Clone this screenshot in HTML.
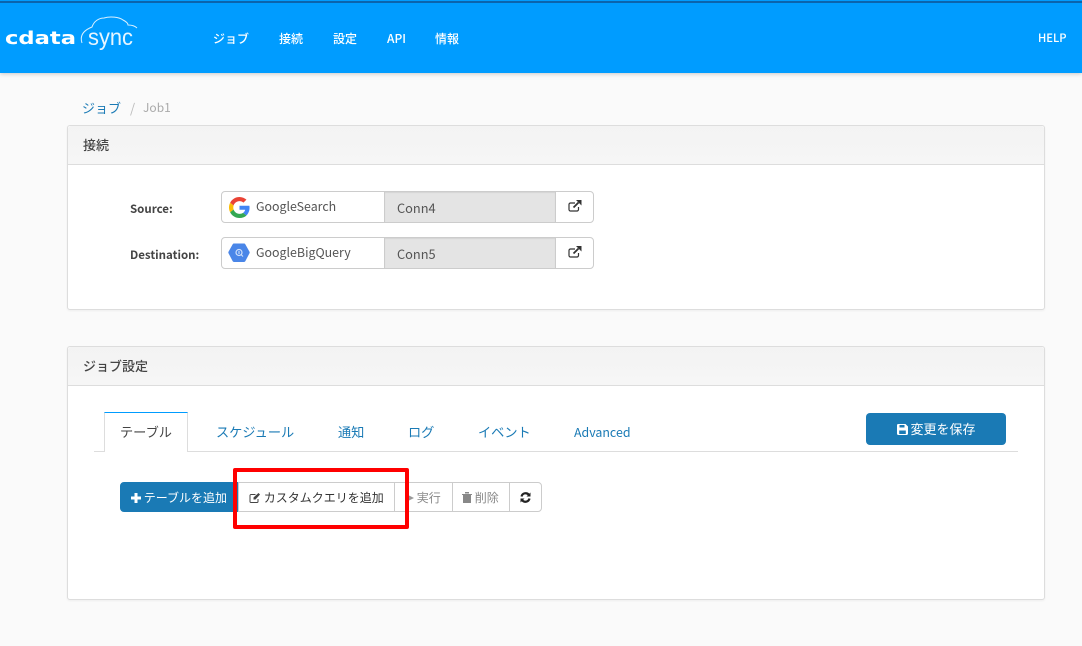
<!DOCTYPE html>
<html lang="ja">
<head>
<meta charset="utf-8">
<style>
*{box-sizing:border-box}
html,body{margin:0;padding:0}
body{width:1082px;height:646px;position:relative;overflow:hidden;background:#fafafa;font-family:"Noto Sans CJK JP","Liberation Sans",sans-serif;font-size:13px;color:#444}
.a{position:absolute;white-space:nowrap}
.top{position:absolute;left:0;top:0;width:1082px;height:73px;background:#009cff;box-shadow:0 1px 4px rgba(0,0,0,.2)}
.stripe{position:absolute;left:0;top:1px;width:1082px;height:2px;background:#0b64ad}
.nav{color:#fff;font-size:12px;font-weight:500;top:30px;line-height:17px}
.panel{position:absolute;left:67px;width:978px;background:#fff;border:1px solid #ddd;border-radius:3px;box-shadow:0 1px 2px rgba(0,0,0,.05)}
.ph{height:39px;background:linear-gradient(#f3f3f3,#f6f6f6);border-bottom:1px solid #ddd;font-size:13px;font-weight:500;color:#444;line-height:37px;padding-left:15px;border-radius:3px 3px 0 0}
.lbl{font-size:11.5px;font-weight:700;color:#444;left:130px;line-height:16px}
.grp{position:absolute;left:221px;width:373px;height:32px;background:#fff;border:1px solid #ccc;border-radius:4px}
.gray{position:absolute;left:162px;top:0;width:172px;height:30px;background:#e4e4e4;border-left:1px solid #ccc;border-right:1px solid #ccc;box-shadow:inset 0 1px 1px rgba(0,0,0,.07);font-size:12.8px;line-height:32px;padding-left:12px;color:#555}
.name{position:absolute;left:34px;top:0;line-height:29px;font-size:12.4px;color:#555}
.ext{position:absolute;left:346px;top:8px}
.tab{font-size:13.2px;color:#1a7ab5;top:423px;line-height:18px}
.btn{position:absolute;top:482px;height:30px;background:#fff;border:1px solid #ccc;font-size:12px;line-height:29px;color:#888;white-space:nowrap}
</style>
</head>
<body>
<div class="top"></div>
<div class="stripe"></div>
<svg class="a" style="left:0;top:0" width="150" height="70" viewBox="0 0 150 70">
<text x="5" y="44" font-family="'DejaVu Sans',sans-serif" font-size="18" font-weight="bold" fill="#fff" textLength="71" lengthAdjust="spacingAndGlyphs">cdata</text>
<text x="88" y="45" font-family="'Liberation Sans',sans-serif" font-size="23" fill="#fff" fill-opacity=".9" textLength="45" lengthAdjust="spacingAndGlyphs">sync</text>
<path d="M82 43C80 37 82 31 92 27C94 21 99 18 104 18C110 16 119 17 123 20C127 22 128 24 128 25C132 25 135 26 137 28" fill="none" stroke="#fff" stroke-opacity=".85" stroke-width="1"/>
</svg>
<div class="a nav" style="left:213px">ジョブ</div>
<div class="a nav" style="left:279px">接続</div>
<div class="a nav" style="left:333px">設定</div>
<div class="a nav" style="left:387px">API</div>
<div class="a nav" style="left:435px">情報</div>
<div class="a nav" style="left:1038px;font-size:11.2px">HELP</div>

<div class="a" style="left:82px;top:100px;line-height:16px;font-size:13px;color:#1a7ab5">ジョブ</div>
<div class="a" style="left:130px;top:100px;line-height:16px;font-size:13px;color:#bbb">/</div>
<div class="a" style="left:143px;top:100px;line-height:16px;font-size:12px;color:#aaa">Job1</div>

<div class="panel" style="top:125px;height:185px"><div class="ph">接続</div></div>
<div class="a lbl" style="top:201px">Source:</div>
<div class="a lbl" style="top:247px">Destination:</div>

<div class="grp" style="top:191px">
<svg class="a" style="left:7px;top:5px" width="21" height="21" viewBox="0 0 48 48">
<path fill="#EA4335" d="M24 9.500c3.500 0 6.700 1.300 9.100 3.400l6.800-6.800C35.800 2.400 30.200 0 24 0 14.600 0 6.500 5.400 2.600 13.200l7.900 6.100C12.400 13.700 17.700 9.500 24 9.500z"/>
<path fill="#4285F4" d="M47 24.500c0-1.600-.1-3.100-.4-4.500H24v9h12.900c-.6 3-2.300 5.500-4.800 7.200l7.700 6C44.300 37.600 47 31.600 47 24.500z"/>
<path fill="#FBBC05" d="M10.500 28.700C10 27.200 9.800 25.600 9.800 24s.3-3.200.7-4.700l-7.900-6.100C.9 16.500 0 20.100 0 24s.9 7.500 2.600 10.800l7.900-6.100z"/>
<path fill="#34A853" d="M24 48c6.500 0 11.900-2.100 15.900-5.800l-7.700-6c-2.200 1.400-4.900 2.300-8.200 2.300-6.300 0-11.600-4.200-13.500-9.800l-7.900 6.100C6.500 42.600 14.600 48 24 48z"/>
</svg>
<div class="name">GoogleSearch</div>
<div class="gray">Conn4</div>
<svg class="ext" style="top:7px" width="14" height="14" viewBox="0 0 14 14"><path d="M10.500 8v2.500a1.500 1.500 0 0 1-1.500 1.500H2.500A1.500 1.500 0 0 1 1 10.500V5.500A1.500 1.500 0 0 1 2.500 4H7" fill="none" stroke="#333" stroke-width="1.200"/><path d="M5.500 8.500 10.500 3.500" stroke="#333" stroke-width="1.800"/><path d="M8 1h5.500v5.500z" fill="#333"/></svg>
</div>

<div class="grp" style="top:237px">
<svg class="a" style="left:6px;top:5px" width="22" height="20" viewBox="0 0 22 20">
<path d="M6 .5h10a1.500 1.500 0 0 1 1.300.7l4.200 7.600a1.500 1.500 0 0 1 0 1.400l-4.200 8.100a1.500 1.500 0 0 1-1.300.7H6a1.500 1.500 0 0 1-1.300-.7L.5 10.200a1.500 1.500 0 0 1 0-1.400L4.700 1.200A1.500 1.500 0 0 1 6 .5z" fill="#4a86e8"/>
<circle cx="11" cy="9.500" r="3" fill="none" stroke="#cfe0fb" stroke-width="1.200"/>
<path d="M13 11.500 15 13.500M11 8v3" stroke="#cfe0fb" stroke-width="1.100"/>
</svg>
<div class="name">GoogleBigQuery</div>
<div class="gray">Conn5</div>
<svg class="ext" style="top:7px" width="14" height="14" viewBox="0 0 14 14"><path d="M10.500 8v2.500a1.500 1.500 0 0 1-1.500 1.500H2.500A1.500 1.500 0 0 1 1 10.500V5.500A1.500 1.500 0 0 1 2.500 4H7" fill="none" stroke="#333" stroke-width="1.200"/><path d="M5.500 8.500 10.500 3.500" stroke="#333" stroke-width="1.800"/><path d="M8 1h5.500v5.500z" fill="#333"/></svg>
</div>

<div class="panel" style="top:346px;height:254px"><div class="ph">ジョブ設定</div></div>

<div class="a" style="left:94px;top:451px;width:924px;height:1px;background:#ddd"></div>
<div class="a" style="left:104px;top:412px;width:84px;height:40px;background:#fff;border:1px solid #ddd;border-top:1px solid #009cff;border-bottom:0"></div>
<div class="a tab" style="left:120px;color:#444">テーブル</div>
<div class="a tab" style="left:216px">スケジュール</div>
<div class="a tab" style="left:338px">通知</div>
<div class="a tab" style="left:408px">ログ</div>
<div class="a tab" style="left:478px">イベント</div>
<div class="a tab" style="left:574px;font-size:12.4px">Advanced</div>

<div class="a" style="left:866px;top:413px;width:140px;height:32px;background:#1a7ab5;border-radius:4px;color:#fff;font-size:13px;line-height:31px;text-align:center">
<svg width="11" height="11" viewBox="0 0 11 11" style="vertical-align:-1px"><path d="M0 1.200A1.200 1.200 0 0 1 1.200 0H8.500L11 2.500V9.800A1.200 1.200 0 0 1 9.800 11H1.200A1.200 1.200 0 0 1 0 9.800z" fill="#fff"/><path d="M2.500 1h5v2.500h-5zM2.200 6.500h6.600V10H2.200z" fill="#1a7ab5"/></svg> 変更を保存</div>

<div class="btn" style="left:120px;width:118px;background:#1a7ab5;border-color:#1a7ab5;border-radius:4px 0 0 4px;color:#fff;padding-left:10px"><svg width="10" height="10" viewBox="0 0 10 10" style="vertical-align:-1px"><path d="M3.500 0h3v3.500H10v3H6.500V10h-3V6.500H0v-3h3.500z" fill="#fff"/></svg> テーブルを追加</div>
<div class="btn" style="left:238px;width:157px;color:#333;padding-left:10px"><svg width="12" height="12" viewBox="0 0 12 12" style="vertical-align:-2px"><path d="M9 7v2.500A1 1 0 0 1 8 10.500H2A1 1 0 0 1 1 9.500V3.500A1 1 0 0 1 2 2.500h4.500" fill="none" stroke="#444" stroke-width="1"/><path d="M4.500 5.500 9.500 1 11 2.500 6.500 7.500 4.500 7.500z" fill="#444"/></svg> カスタムクエリを追加</div>
<div class="btn" style="left:394px;width:59px;padding-left:11px"><svg width="8" height="10" viewBox="0 0 8 10" style="vertical-align:-1px"><path d="M0 1 8 5 0 9z" fill="#999"/></svg> 実行</div>
<div class="btn" style="left:452px;width:58px;padding-left:9px"><svg width="10" height="11" viewBox="0 0 10 11" style="vertical-align:-1px"><path d="M0 2h10v1H9v8H1V3H0zM3 0h4v1.500H3z" fill="#888"/></svg> 削除</div>
<div class="btn" style="left:509px;width:33px;border-radius:0 4px 4px 0;padding-left:10px"><svg width="11" height="11" viewBox="0 0 11 11" style="vertical-align:-1px"><path d="M1.500 4.500A4.200 4.200 0 0 1 9 3M9.500 6.500A4.200 4.200 0 0 1 2 8" fill="none" stroke="#222" stroke-width="2.200"/><path d="M10.500 .5V4.500H6.500zM.5 10.500V6.500H4.500z" fill="#222"/></svg></div>

<div class="a" style="left:233px;top:468px;width:176px;height:61px;border:4px solid #f00;border-radius:2px"></div>
</body>
</html>
